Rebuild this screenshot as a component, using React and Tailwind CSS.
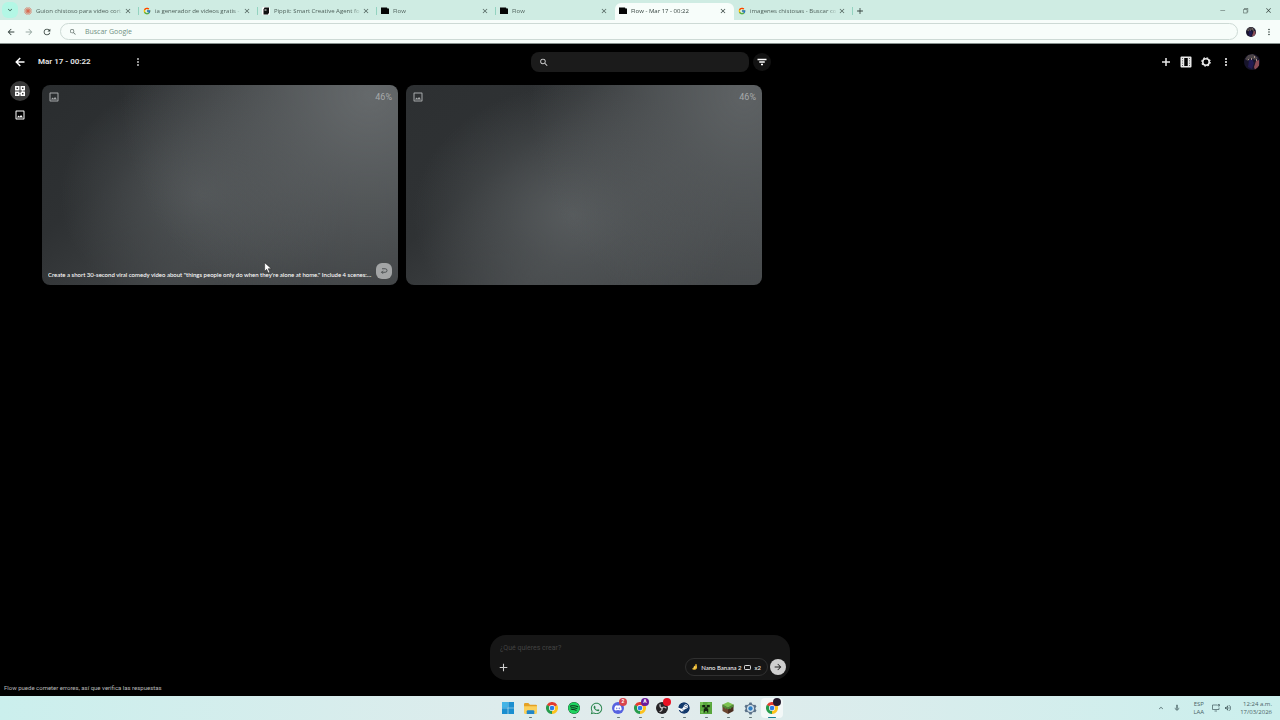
import { useState } from 'react';
import {
  MdAdd, MdArrowBack, MdArrowForward, MdClose, MdExpandMore, MdExpandLess,
  MdMoreVert, MdRefresh, MdSearch, MdOutlineImage, MdOutlineMicNone, MdOutlineVolumeUp,
} from 'react-icons/md';
import { FcGoogle } from 'react-icons/fc';
import { FaSpotify, FaWhatsapp, FaDiscord, FaSteam } from 'react-icons/fa';
import { VscChromeMinimize, VscChromeRestore, VscChromeClose } from 'react-icons/vsc';

const tabs = [
  { id: 1, title: 'Guion chistoso para video cort', icon: 'claude' },
  { id: 2, title: 'ia generador de videos gratis -', icon: 'google' },
  { id: 3, title: 'Pippit: Smart Creative Agent fo', icon: 'pippit' },
  { id: 4, title: 'Flow', icon: 'flow' },
  { id: 5, title: 'Flow', icon: 'flow' },
  { id: 6, title: 'Flow - Mar 17 - 00:22', icon: 'flow', active: true },
  { id: 7, title: 'imagenes chistosas - Buscar co', icon: 'google' },
];

function Favicon({ name }) {
  if (name === 'google') return <FcGoogle className="size-2 shrink-0" />;
  if (name === 'claude') {
    return (
      <svg viewBox="0 0 16 16" className="size-2 shrink-0" stroke="#d9694f" strokeWidth="1.4" strokeLinecap="round">
        <path d="M8 1v14M1 8h14M3 3l10 10M13 3L3 13M5.3 1.6l5.4 12.8M10.7 1.6L5.3 14.4M1.6 5.3l12.8 5.4M14.4 5.3L1.6 10.7" />
      </svg>
    );
  }
  if (name === 'pippit') {
    return (
      <svg viewBox="0 0 16 16" className="size-2 shrink-0">
        <rect width="16" height="16" rx="3" fill="#fff" />
        <path d="M5 1h9v10l-2 4H3V5z" fill="#111" />
        <path d="M5 5h4v2H5z" fill="#fff" />
      </svg>
    );
  }
  return (
    <svg viewBox="0 0 16 16" className="size-2 shrink-0">
      <path d="M0 1h12l1 2h3v11H0z" fill="#050505" />
    </svg>
  );
}

function Tab({ tab, next }) {
  return (
    <div className={`relative flex h-[17px] w-[119px] min-w-0 items-center rounded-t-md px-1 pb-[2px] ${tab.active ? 'bg-[#f7fdfa] text-[#35423e]' : 'text-[#4d5f59]'}`}>
      <button role="tab" aria-selected={!!tab.active} className="flex min-w-0 flex-1 items-center gap-1 text-left">
        <Favicon name={tab.icon} />
        <span className="flex-1 overflow-hidden whitespace-nowrap mask-r-from-90%">{tab.title}</span>
      </button>
      <button aria-label="Cerrar" className="ml-px mr-[3px]"><MdClose className="size-2" /></button>
      {!tab.active && !next?.active && <span className="absolute right-0 h-2 w-px bg-[#93d3c0]" />}
    </div>
  );
}

function Chrome({ className = 'size-3' }) {
  return (
    <svg viewBox="0 0 48 48" className={className}>
      <path d="M24 24L3.2 12A24 24 0 0 1 44.8 12z" fill="#e33b2e" />
      <path d="M24 24L3.2 12A24 24 0 0 0 24 48z" fill="#269c4b" />
      <path d="M24 24l20.8-12A24 24 0 0 1 24 48z" fill="#fcc31e" />
      <path d="M24 12h20.8L24 24z" fill="#e33b2e" />
      <path d="M13.6 30L3.2 12 24 24z" fill="#269c4b" />
      <path d="M34.4 30L24 48V24z" fill="#fcc31e" />
      <circle cx="24" cy="24" r="12" fill="#fff" />
      <circle cx="24" cy="24" r="9.5" fill="#2b7de9" />
    </svg>
  );
}

function Windows() {
  return (
    <svg viewBox="0 0 24 24" className="size-3">
      <path d="M0 0h11.4v11.4H0zM12.6 0H24v11.4H12.6zM0 12.6h11.4V24H0zM12.6 12.6H24V24H12.6z" fill="#1b8fd0" />
      <path d="M0 0h11.4v11.4H0z" fill="#43b4e6" />
    </svg>
  );
}

function Folder() {
  return (
    <svg viewBox="0 0 24 24" className="size-[13px]">
      <path d="M0 4q0-2 2-2h6l3 3h11q2 0 2 2v4H0z" fill="#e4a125" />
      <path d="M0 8h24v12q0 2-2 2H2q-2 0-2-2z" fill="#fbd05b" />
      <path d="M5 22v-5q0-2 2-2h10q2 0 2 2v5z" fill="#1f86c9" />
    </svg>
  );
}

function Obs() {
  return (
    <svg viewBox="0 0 24 24" className="size-3">
      <circle cx="12" cy="12" r="12" fill="#252326" />
      <g fill="none" stroke="#c9c7c9" strokeWidth="2.2" strokeLinecap="round">
        <path d="M12 12q-5-1-4-7" />
        <path d="M12 12q-5-1-4-7" transform="rotate(120 12 12)" />
        <path d="M12 12q-5-1-4-7" transform="rotate(240 12 12)" />
      </g>
    </svg>
  );
}

function Creeper() {
  return (
    <svg viewBox="0 0 16 16" className="size-3">
      <path d="M0 0h16v16H0z" fill="#58a63c" />
      <path d="M0 0h4v4H0zM10 1h4v2h-4zM1 12h3v3H1z" fill="#76c257" />
      <path d="M3 4h4v3H3zM9 4h4v3H9zM6 7h4v2h1v5H9.5v-2h-3v2H5V9h1z" fill="#14230f" />
    </svg>
  );
}

function GrassBlock() {
  return (
    <svg viewBox="0 0 24 24" className="size-3">
      <path d="M12 0l11 5-11 6L1 5z" fill="#7cc34f" />
      <path d="M1 5l11 6v13L1 18z" fill="#6b4630" />
      <path d="M23 5l-11 6v13l11-6z" fill="#4a2d21" />
      <path d="M1 5l11 6v4l-3-3-2 2-3-4-3 1zM23 5l-11 6v4l3-2 2 1 3-4 3 1z" fill="#4d8f34" />
    </svg>
  );
}

function SettingsApp() {
  return (
    <svg viewBox="0 0 24 24" className="size-[13px]">
      <path d="M10 1h4l1 3 3 1.5 3-.5 2 3.5L21 11v2l2 2.5-2 3.5-3-.5-3 1.5-1 3h-4l-1-3-3-1.5-3 .5-2-3.5L3 13v-2L1 8.5 3 5l3 .5L9 4z" fill="#5b7289" />
      <circle cx="12" cy="12" r="6.5" fill="#d3e2ec" />
      <circle cx="12" cy="12" r="4" fill="#2f7fc4" />
    </svg>
  );
}

function Mosaic() {
  return (
    <svg viewBox="0 0 24 24" className="size-3" fill="none" stroke="currentColor" strokeWidth="3">
      <path d="M3.5 3.5h6v6h-6zM14.5 3.5h6v6h-6zM3.5 14.5h6v6h-6zM14.5 14.5h6v6h-6z" />
      <path d="M8 17.5h8M17.5 8v8" strokeWidth="2" />
    </svg>
  );
}

function Film() {
  return (
    <svg viewBox="0 0 24 24" className="size-3">
      <path fillRule="evenodd" fill="currentColor" d="M3 1h18q2 0 2 2v18q0 2-2 2H3q-2 0-2-2V3q0-2 2-2zM8.5 4v16h7V4zM4 4.5v1.5h1.5V4.5zM4 9v1.5h1.5V9zM4 13.5v1.5h1.5v-1.5zM4 18v1.5h1.5V18zM18.5 4.5v1.5H20V4.5zM18.5 9v1.5H20V9zM18.5 13.5v1.5H20v-1.5zM18.5 18v1.5H20V18z" />
    </svg>
  );
}

function Gear() {
  return (
    <svg viewBox="0 0 24 24" className="size-[10px]" fill="none" stroke="currentColor">
      <circle cx="12" cy="12" r="7.8" strokeWidth="3.8" />
      <circle cx="12" cy="12" r="10" strokeWidth="3" strokeDasharray="3.927 3.927" />
    </svg>
  );
}

// heavier strokes than the Material versions
function BoldIcon({ d }) {
  return (
    <svg viewBox="0 0 24 24" className="size-3" fill="none" stroke="currentColor" strokeWidth="3">
      <path d={d} />
    </svg>
  );
}

function Avatar({ className }) {
  return (
    <svg viewBox="0 0 16 16" className={`rounded-full ${className}`}>
      <path d="M0 0h16v16H0z" fill="#17142b" />
      <path d="M1 5l3-4 5-1 5 4-3 2-4-2-3 3z" fill="#4a4346" />
      <path d="M12 7l3-1v6l-4 4-1-3z" fill="#8b4c55" />
      <path d="M5 6l3-1 2 4-2 6-4-2z" fill="#211b52" />
      <path d="M7 4h1v2H7zM12 5h1v2h-1zM4 5h1v1H4zM10 2h1v2h-1z" fill="#a58f86" />
    </svg>
  );
}

const apps = [
  { name: 'Inicio', icon: <Windows /> },
  { name: 'Explorador de archivos', icon: <Folder />, open: true },
  { name: 'Google Chrome', icon: <Chrome /> },
  { name: 'Spotify', icon: <FaSpotify className="size-3 rounded-full bg-[#10351d] text-[#1ed35f]" />, open: true },
  { name: 'WhatsApp', icon: <FaWhatsapp className="size-[13px] text-[#28854c]" /> },
  {
    name: 'Discord', open: true, badge: '2', badgeClass: 'bg-[#d9454e]',
    icon: <span className="grid size-3 place-items-center rounded-full bg-[#5662e0]"><FaDiscord className="size-2 text-white" /></span>,
  },
  { name: 'Chrome (A)', icon: <Chrome />, open: true, badge: 'A', badgeClass: 'bg-[#6a1b9a]' },
  { name: 'OBS Studio', icon: <Obs />, open: true, badge: ' ', badgeClass: 'bg-[#e81123]' },
  { name: 'Steam', icon: <FaSteam className="size-3 rounded-full bg-white text-[#12396b]" />, open: true },
  { name: 'Minecraft', icon: <Creeper />, open: true },
  { name: 'Minecraft Launcher', icon: <GrassBlock />, open: true },
  { name: 'Configuración', icon: <SettingsApp />, open: true },
  { name: 'Chrome', icon: <Chrome />, active: true, badge: ' ', badgeClass: 'bg-[#241a2c]' },
];

function BrowserBar() {
  return (
    <header className="font-['Open_Sans',sans-serif] text-[6px] leading-[10px]">
      <div className="flex h-5 items-end bg-[#cfece3]">
        <button aria-label="Buscar pestañas" className="mb-[2px] ml-[2px] mr-[2px] grid size-4 place-items-center rounded-md bg-[#b3f7e5] text-[#24463c]">
          <MdExpandMore className="size-2" />
        </button>
        <div role="tablist" className="flex min-w-0">
          {tabs.map((t, i) => <Tab key={t.id} tab={t} next={tabs[i + 1]} />)}
        </div>
        <button aria-label="Nueva pestaña" className="mb-1 ml-[2px] text-[#35423e]"><MdAdd className="size-[10px]" /></button>
        <div className="ml-auto flex items-center gap-4 self-center pr-2 text-[#35423e]">
          <button aria-label="Minimizar"><VscChromeMinimize className="size-[7px]" /></button>
          <button aria-label="Restaurar"><VscChromeRestore className="size-[7px]" /></button>
          <button aria-label="Cerrar ventana"><VscChromeClose className="size-[7px]" /></button>
        </div>
      </div>
      <div className="flex h-6 items-center border-b border-[#87918e] bg-[#f7fdfa] px-[6px] text-[#33403c]">
        <button aria-label="Atrás"><MdArrowBack className="size-[10px]" /></button>
        <button aria-label="Adelante" className="ml-2 text-[#9aaaa4]"><MdArrowForward className="size-[10px]" /></button>
        <button aria-label="Recargar" className="ml-2 mr-2"><MdRefresh className="size-[10px]" /></button>
        <label className="flex h-[17px] flex-1 items-center gap-2 rounded-full border border-[#cddad5] px-2">
          <MdSearch className="size-2 text-[#5c6a65]" />
          <input aria-label="Buscar Google" placeholder="Buscar Google" className="w-full text-[7px] outline-none placeholder:text-[#6f9083]" />
        </label>
        <button aria-label="Perfil" className="ml-2"><Avatar className="size-[10px]" /></button>
        <button aria-label="Menú" className="ml-2"><MdMoreVert className="size-[10px]" /></button>
      </div>
    </header>
  );
}

function Toolbar() {
  return (
    <div className="grid grid-cols-[1fr_218px_1fr] items-center pt-2">
      <div className="flex items-center pl-[14px]">
        <button aria-label="Volver"><BoldIcon d="M21 12H5M12.5 4L4.5 12l8 8" /></button>
        <h1 className="ml-3 w-[94px] text-[8px] leading-3 font-semibold text-[#e6e6e6]">Mar 17 - 00:22</h1>
        <button aria-label="Más opciones" className="text-[#b0b0b0]"><MdMoreVert className="size-3" /></button>
      </div>
      <label className="flex h-5 items-center gap-2 rounded-lg bg-[#1b1b1b] px-2">
        <MdSearch className="size-[11px] text-[#dcdcdc]" />
        <input aria-label="Buscar" className="w-full text-[9px] outline-none" />
      </label>
      <div className="flex items-center pl-1">
        <button aria-label="Filtrar" className="grid size-[18px] place-items-center rounded-full bg-[#121212]">
          <BoldIcon d="M3 7h18M6.5 12h11M10 17h4" />
        </button>
        <div className="ml-auto flex items-center pr-5">
          <div className="mr-2 flex text-[#e8e8e8]">
            <button aria-label="Añadir" className="grid size-5 place-items-center"><BoldIcon d="M12 4v16M4 12h16" /></button>
            <button aria-label="Escenas" className="grid size-5 place-items-center"><Film /></button>
            <button aria-label="Ajustes" className="grid size-5 place-items-center"><Gear /></button>
            <button aria-label="Más" className="grid size-5 place-items-center"><MdMoreVert className="size-3" /></button>
          </div>
          <button aria-label="Cuenta"><Avatar className="size-4" /></button>
        </div>
      </div>
    </div>
  );
}

function Card({ percent, prompt, glow }) {
  return (
    <article className={`flex aspect-video w-[356px] flex-col justify-between rounded-lg ${glow}`}>
      <div className="flex items-center justify-between px-[6px] pt-[6px] text-[#a7aaab]">
        <MdOutlineImage className="size-3" />
        <span className="text-[9px] leading-3">{percent}%</span>
      </div>
      {prompt && (
        <div className="flex items-end gap-1 px-[6px] pb-[6px]">
          <p className="flex-1 truncate font-[Lato,sans-serif] text-[6px] leading-2 font-medium text-white">{prompt}</p>
          <button aria-label="Reutilizar instrucción" className="grid size-4 place-items-center rounded-md bg-[#a3a5a6] text-[#45494b]">
            <svg viewBox="0 0 16 16" className="size-2" fill="none" stroke="currentColor" strokeWidth="1.8">
              <path d="M4 3.5h6.5a3.5 3.5 0 0 1 0 7H3M6 7.5l-3 3 3 3" />
            </svg>
          </button>
        </div>
      )}
    </article>
  );
}

function PromptBox() {
  const [text, setText] = useState('');
  return (
    <form className="w-[300px] rounded-2xl bg-[#161616] px-1 pb-1 pt-[7px]" onSubmit={(e) => e.preventDefault()}>
      <input
        aria-label="Instrucción"
        value={text}
        onChange={(e) => setText(e.target.value)}
        placeholder="¿Qué quieres crear?"
        className="block w-full px-[6px] text-[7px] leading-3 text-white outline-none placeholder:text-[#434343]"
      />
      <div className="mt-1 flex items-center">
        <button type="button" aria-label="Adjuntar" className="ml-[3px] text-[#cfcfcf]"><MdAdd className="size-[13px]" /></button>
        <button type="button" className="ml-auto mr-[2px] flex h-[18px] items-center gap-[3px] rounded-full border border-[#303030] px-[6px] font-[Lato,sans-serif] text-[6px] font-medium text-[#f0f0f0]">
          <svg viewBox="0 0 12 12" className="size-[6px]">
            <path d="M7 0h2l1 5q1 6-5 6.5Q1 12 0 9q5 0 6-4z" fill="#e9b52c" />
            <path d="M3 6l3-3 1 5-4 2z" fill="#f6d365" />
          </svg>
          Nano Banana 2
          <svg viewBox="0 0 14 10" className="h-[5px] w-[7px]" fill="none" stroke="currentColor" strokeWidth="1.8">
            <rect x="1" y="1" width="12" height="8" rx="1.5" />
          </svg>
          x2
        </button>
        <button aria-label="Crear" className="grid size-4 place-items-center rounded-full bg-[#cfcfcf] text-[#222]">
          <MdArrowForward className="size-[10px]" />
        </button>
      </div>
    </form>
  );
}

function Taskbar() {
  return (
    <footer className="grid h-6 grid-cols-[1fr_auto_1fr] items-center bg-linear-to-r from-[#cbefed] via-[#e2ebec] to-[#cbefed]">
      <nav className="col-start-2 flex">
        {apps.map((a) => (
          <button key={a.name} aria-label={a.name} className={`relative grid h-5 w-[22px] place-items-center rounded-sm ${a.active ? 'bg-[#f3f8f8]' : ''}`}>
            {a.icon}
            {a.badge && (
              <span className={`absolute right-[2px] top-0 grid size-2 place-items-center rounded-full text-[5px] font-bold text-white ${a.badgeClass}`}>{a.badge}</span>
            )}
            {a.open && <span className="absolute bottom-0 h-px w-[3px] rounded-full bg-[#667879]" />}
            {a.active && <span className="absolute bottom-0 h-px w-2 rounded-full bg-[#197d91]" />}
          </button>
        ))}
      </nav>
      <div className="flex items-center justify-end gap-2 pr-2 font-['Open_Sans',sans-serif] text-[6px] leading-2 text-[#4a6265]">
        <MdExpandLess className="size-2" />
        <MdOutlineMicNone className="mr-1 size-2" />
        <p className="text-center">ESP<br />LAA</p>
        <div className="flex items-center gap-1">
          <svg viewBox="0 0 16 16" className="size-2" fill="none" stroke="currentColor" strokeWidth="1.5">
            <path d="M10 2H1v9h13V7M5 14h5M12 1h3v3h-3z" />
          </svg>
          <MdOutlineVolumeUp className="size-2" />
        </div>
        <time className="text-right">12:24 a.m.<br />17/03/2026</time>
      </div>
    </footer>
  );
}

export default function App() {
  return (
    <div className="flex min-h-screen flex-col bg-black font-[Roboto,sans-serif] text-white">
      <BrowserBar />
      <main className="flex flex-1 flex-col">
        <Toolbar />
        <div className="flex flex-1 pt-[9px]">
          <nav className="flex w-[42px] flex-col items-center gap-1 pr-[2px]">
            <button aria-label="Todo" className="grid size-5 place-items-center rounded-full bg-[#3a3a3a]"><Mosaic /></button>
            <button aria-label="Imágenes" className="grid size-5 place-items-center"><MdOutlineImage className="size-3" /></button>
          </nav>
          <section className="relative flex flex-1 flex-wrap content-start gap-2 pt-1">
            <Card
              percent={46}
              prompt={'Create a short 30-second viral comedy video about "things people only do when they\'re alone at home." Include 4 scenes: ...'}
              glow="bg-[radial-gradient(ellipse_70%_120%_at_92%_5%,#65696b_0%,#5d6163cc_35%,transparent_100%),radial-gradient(ellipse_40%_60%_at_45%_55%,#505456_0%,#4d5153aa_40%,transparent_100%),linear-gradient(140deg,#2a2d2f_0%,#2e3133_30%,#404345_60%,#3a3d3f_100%)]"
            />
            <Card
              percent={46}
              glow="bg-[radial-gradient(ellipse_60%_120%_at_95%_5%,#5e6264_0%,#575b5dcc_35%,transparent_100%),radial-gradient(ellipse_45%_65%_at_47%_65%,#575b5d_0%,#525658aa_40%,transparent_100%),linear-gradient(140deg,#2d3032_0%,#2f3234_32%,#434648_60%,#414446_100%)]"
            />
            <svg viewBox="0 0 12 18" className="absolute left-[222px] top-[181px] h-3 w-2">
              <path d="M1 1v13l3-3 2.5 5.5 2.2-1L6.3 10H11z" fill="#fff" stroke="#222" strokeWidth=".8" />
            </svg>
          </section>
        </div>
        <div className="flex justify-center"><PromptBox /></div>
        <p className="px-1 pb-[3px] pt-[3px] text-[6px] leading-[10px] text-[#b9b9b9]">Flow puede cometer errores, así que verifica las respuestas</p>
      </main>
      <Taskbar />
    </div>
  );
}
